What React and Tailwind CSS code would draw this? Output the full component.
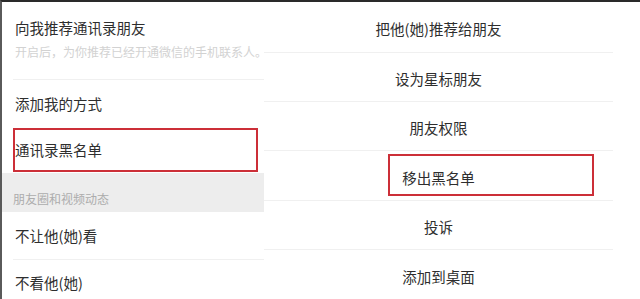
import React from 'react';

const font = { fontFamily: '"Noto Sans CJK SC", "Noto Sans", sans-serif' };

function LeftPanel() {
    return (
        <div className="relative w-[262px] shrink-0 bg-white">
            {/* Recommend row */}
            <div className="ml-[11px] pl-[2px] pt-[16px] pb-[19px] border-b border-[#f0f0f0]">
                <div className="text-[14.5px] leading-[20px] text-[#2e2e2e]">向我推荐通讯录朋友</div>
                <div className="mt-[6px] text-[12px] leading-[16px] text-[#d2d2d2] whitespace-nowrap">
                    开启后，为你推荐已经开通微信的手机联系人。
                </div>
            </div>

            <div className="ml-[11px] pl-[2px] h-[47px] flex items-center text-[14.5px] text-[#2e2e2e]">
                添加我的方式
            </div>
            <div className="ml-[11px] pl-[2px] h-[46px] flex items-center text-[14.5px] text-[#2e2e2e]">
                通讯录黑名单
            </div>

            {/* Section header */}
            <div className="h-[39px] bg-[#ededed] pl-[11px] pt-[18px] text-[12px] leading-[16px] text-[#acacac]">
                朋友圈和视频动态
            </div>

            <div className="ml-[11px] pl-[2px] h-[48px] flex items-center border-b border-[#f0f0f0] text-[14.5px] text-[#2e2e2e]">
                不让他(她)看
            </div>
            <div className="ml-[11px] pl-[2px] h-[46px] flex items-center text-[14.5px] text-[#2e2e2e]">
                不看他(她)
            </div>

            {/* Highlight */}
            <div className="absolute left-[11px] top-[126px] w-[245px] h-[44px] border-[2.5px] border-[#cc2f38]" />
        </div>
    );
}

const rightRows = [
    { label: '把他(她)推荐给朋友', h: 'h-[51px]' },
    { label: '设为星标朋友', h: 'h-[49px]' },
    { label: '朋友权限', h: 'h-[49px]' },
    { label: '移出黑名单', h: 'h-[50px]' },
    { label: '投诉', h: 'h-[49px]' },
    { label: '添加到桌面', h: 'h-[50px]', last: true },
];

function RightPanel() {
    return (
        <div className="relative flex-1 bg-white">
            <div className="w-[349px]">
                {rightRows.map((row) => (
                    <div
                        key={row.label}
                        className={`${row.h} flex items-center justify-center pt-[4px] text-[14.5px] text-[#2e2e2e] ${row.last ? '' : 'border-b border-[#f0f0f0]'}`}
                    >
                        {row.label}
                    </div>
                ))}
            </div>

            {/* Highlight */}
            <div className="absolute left-[124px] top-[152px] w-[206px] h-[42px] border-[2.5px] border-[#cc2f38]" />
        </div>
    );
}

export default function App() {
    return (
        <div
            className="w-[640px] h-[299px] overflow-hidden flex bg-white border-t-2 border-t-[#2a2a2a] border-l-2 border-l-[#5a5a5a]"
            style={font}
        >
            <LeftPanel />
            <RightPanel />
        </div>
    );
}
